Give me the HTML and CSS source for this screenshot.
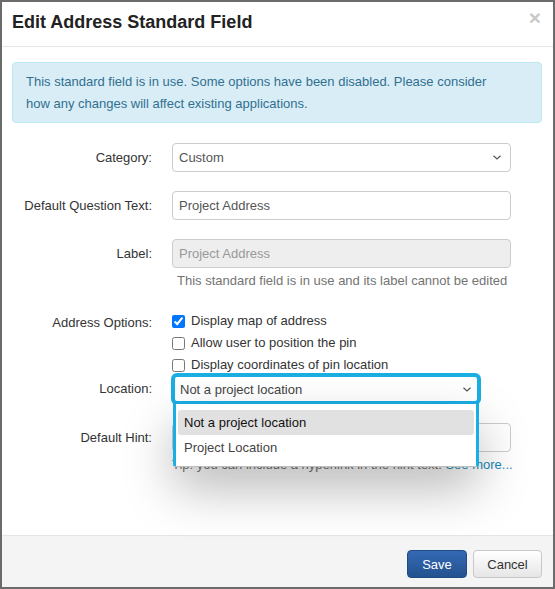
FILE: index.html
```html
<!DOCTYPE html>
<html>
<head>
<meta charset="utf-8">
<link rel="stylesheet" href="styles.css">
</head>
<body>
<div class="modal">
  <div class="modal-header">
    <h4 class="modal-title">Edit Address Standard Field</h4>
    <span class="close">×</span>
  </div>
  <div class="modal-body">
    <div class="alert">This standard field is in use. Some options have been disabled. Please consider how any changes will affect existing applications.</div>
    <div class="form">
      <div class="form-group">
        <label class="control-label">Category:</label>
        <div class="control">
          <div class="select">Custom<svg class="chev" width="8" height="5" viewBox="0 0 8 5"><path d="M0.5 0.7 L4 4 L7.5 0.7" fill="none" stroke="#555" stroke-width="1.2"/></svg></div>
        </div>
      </div>
      <div class="form-group">
        <label class="control-label">Default Question Text:</label>
        <div class="control"><div class="input">Project Address</div></div>
      </div>
      <div class="form-group">
        <label class="control-label">Label:</label>
        <div class="control">
          <div class="input disabled">Project Address</div>
          <div class="help">This standard field is in use and its label cannot be edited</div>
        </div>
      </div>
      <div class="form-group tight">
        <label class="control-label">Address Options:</label>
        <div class="control">
          <label class="check"><input type="checkbox" checked> Display map of address</label>
          <label class="check"><input type="checkbox"> Allow user to position the pin</label>
          <label class="check"><input type="checkbox"> Display coordinates of pin location</label>
        </div>
      </div>
      <div class="form-group loc">
        <label class="control-label">Location:</label>
        <div class="control">
          <div class="select focused">Not a project location<svg class="chev" width="8" height="5" viewBox="0 0 8 5"><path d="M0.5 0.7 L4 4 L7.5 0.7" fill="none" stroke="#555" stroke-width="1.2"/></svg>
            <div class="listbox">
              <div class="option active">Not a project location</div>
              <div class="option">Project Location</div>
            </div>
          </div>
        </div>
      </div>
      <div class="form-group under">
        <label class="control-label">Default Hint:</label>
        <div class="control">
          <div class="input"></div>
          <div class="help tip">Tip: you can include a hyperlink in the hint text. <a href="#">See more...</a></div>
        </div>
      </div>
    </div>
  </div>
  <div class="modal-footer">
    <button class="btn btn-primary">Save</button>
    <button class="btn btn-default">Cancel</button>
  </div>
</div>
</body>
</html>
```
FILE: styles.css
```css
* { box-sizing: border-box; }
html, body { margin: 0; padding: 0; background: #fff; }
body {
  font-family: "Liberation Sans", Arial, sans-serif;
  font-size: 13px;
  color: #333;
}
.modal {
  width: 555px;
  height: 589px;
  border: 2px solid #6b6b6b;
  display: flex;
  flex-direction: column;
  background: #fff;
}
.modal-header {
  height: 45px;
  padding: 10px 12px 0 10px;
  border-bottom: 1px solid #e5e5e5;
  display: flex;
  justify-content: space-between;
  align-items: flex-start;
}
.modal-title {
  margin: 0;
  font-size: 18px;
  line-height: 20px;
  font-weight: bold;
  color: #222;
}
.close {
  font-size: 21px;
  font-weight: bold;
  line-height: 20px;
  color: #c9c9c9;
  margin-top: -4px;
}
.modal-body {
  flex: 1;
  padding: 15px 11px 0 10px;
}
.alert {
  background: #d9edf7;
  border: 1px solid #bce8f1;
  border-radius: 4px;
  color: #31708f;
  padding: 8px 40px 7px 13px;
  line-height: 22px;
  font-size: 13px;
}
.form { margin-top: 20px; }
.form-group {
  display: grid;
  grid-template-columns: 140px 339px;
  column-gap: 20px;
  margin-bottom: 19px;
}
.form-group.tight { margin-bottom: -2px; }
.tight .control { padding-top: 2px; }
.control-label {
  text-align: right;
  line-height: 29px;
  color: #333;
}
.control { position: relative; }
.input, .select {
  height: 29px;
  border: 1px solid #ccc;
  border-radius: 4px;
  padding: 0 6px;
  line-height: 27px;
  color: #555;
  background: #fff;
}
.input.disabled {
  background: #eee;
  color: #999;
}
.select {
  display: flex;
  align-items: center;
  justify-content: space-between;
  padding-right: 9px;
}
.chev { display: block; }
.help {
  margin-top: 4px;
  padding-left: 5px;
  line-height: 17px;
  color: #737373;
}
.help a { color: #1b8ab8; text-decoration: none; }
.tip { padding-left: 0; white-space: nowrap; }
.check {
  display: flex;
  align-items: center;
  line-height: 22px;
  color: #333;
}
.check input {
  margin: 0 6px 0 0;
  width: 13px;
  height: 13px;
}
.loc .control-label { line-height: 30px; }
.loc .control { z-index: 2; }
.select.focused {
  position: relative;
  width: 308px;
  height: 30px;
  border: 3px solid #1aaee3;
  box-shadow: 0 0 0 1px #1aaee3;
  border-radius: 5px;
  padding-left: 5px;
  padding-right: 6px;
  color: #444;
}
.listbox {
  position: absolute;
  top: 27px;
  left: -2px;
  width: 306px;
  height: 63px;
  background: #fff;
  border: 3px solid #1aaee3;
  border-top: 0;
  border-bottom: 1px solid #bdbdbd;
  padding: 6px 2px 0 2px;
  box-shadow: 0 22px 50px rgba(0,0,0,0.27);
  border-radius: 0 0 3px 3px;
}
.option {
  height: 25px;
  line-height: 25px;
  padding-left: 6px;
  border-radius: 3px;
  color: #444;
}
.option.active {
  background: #e1e1e1;
  color: #111;
}
.modal-footer {
  border-top: 1px solid #e5e5e5;
  background: #f4f4f4;
  padding: 14px 11px 9px 0;
  display: flex;
  justify-content: flex-end;
  gap: 6px;
}
.btn {
  font-family: "Liberation Sans", Arial, sans-serif;
  font-size: 13px;
  height: 28px;
  border-radius: 4px;
  padding: 0 12px;
  cursor: pointer;
}
.btn-primary {
  width: 60px;
  color: #fff;
  background: linear-gradient(#3369b3, #24528f);
  border: 1px solid #1f4b86;
}
.btn-default {
  width: 69px;
  color: #333;
  background: linear-gradient(#ffffff, #e6e6e6);
  border: 1px solid #c8c8c8;
}
```
